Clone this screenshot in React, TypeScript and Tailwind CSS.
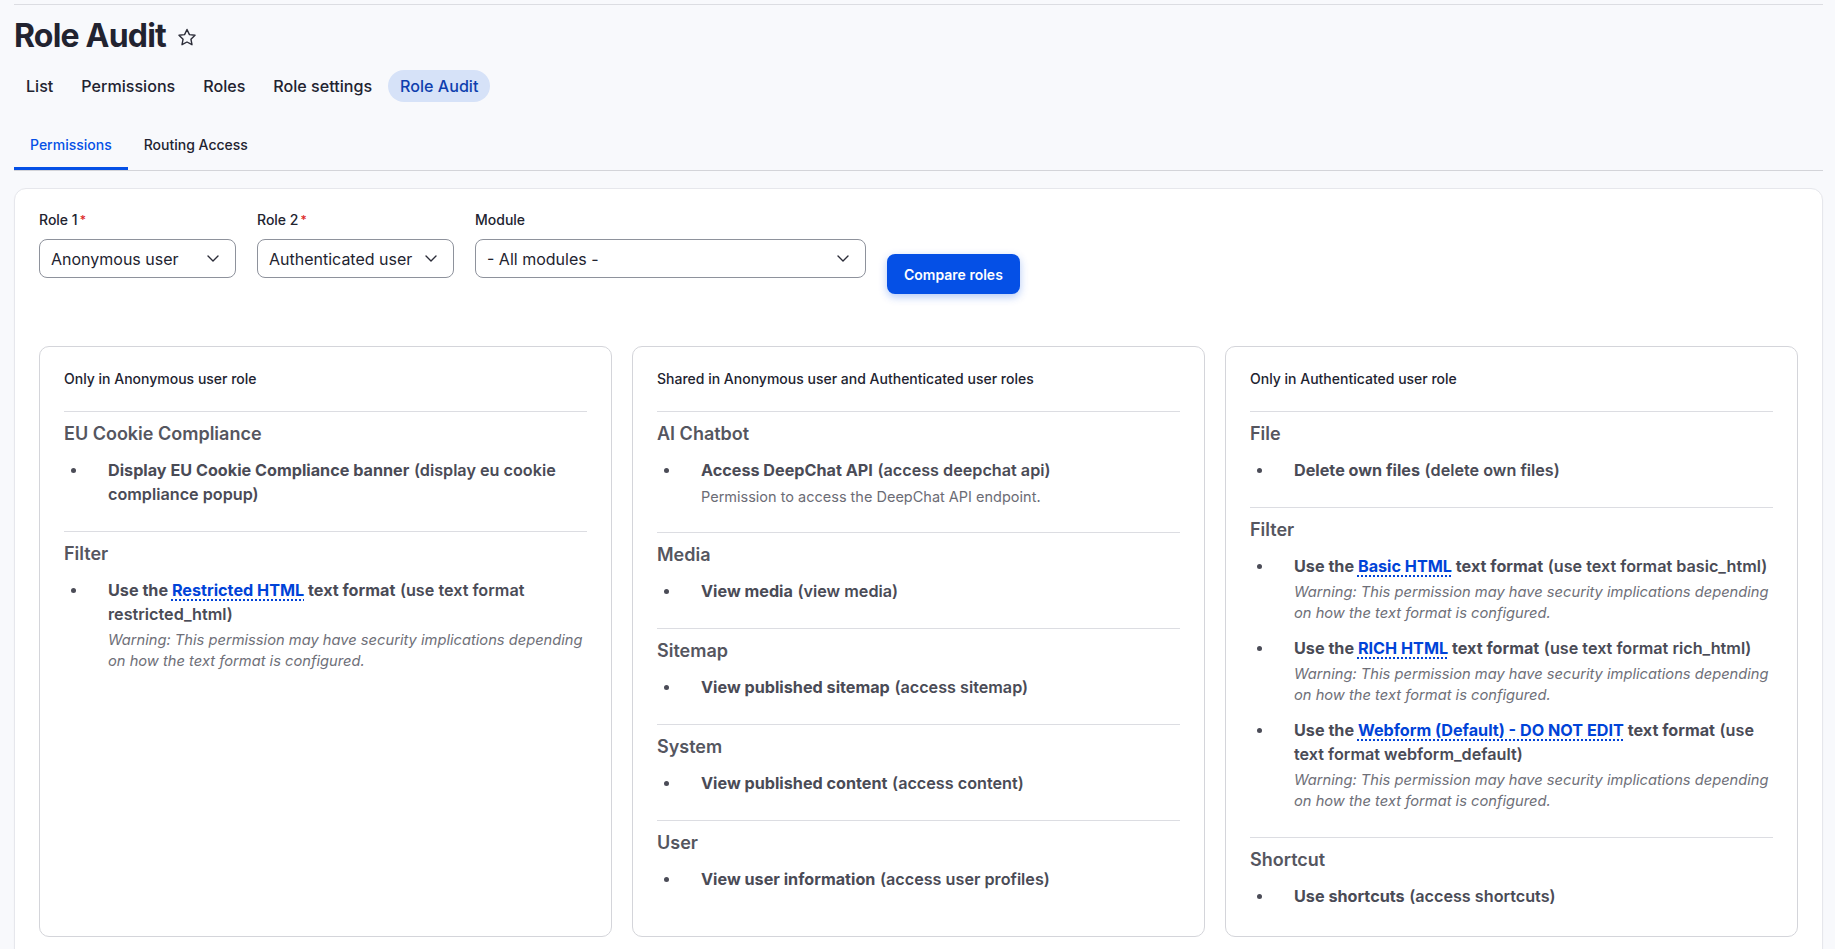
import type { ReactNode } from "react"

type Perm = {
  title: ReactNode
  machine: string
  desc?: string
  warning?: boolean
}

type Section = {
  name: string
  perms: Perm[]
}

type Column = {
  heading: string
  sections: Section[]
}

const Link = ({ children }: { children: ReactNode }) => (
  <a className="text-[#0043d8] underline decoration-dotted decoration-[1.5px] underline-offset-[3px]">{children}</a>
)

const columns: Column[] = [
  {
    heading: "Only in Anonymous user role",
    sections: [
      {
        name: "EU Cookie Compliance",
        perms: [
          {
            title: "Display EU Cookie Compliance banner",
            machine: "display eu cookie compliance popup",
          },
        ],
      },
      {
        name: "Filter",
        perms: [
          {
            title: (
              <>
                Use the <Link>Restricted HTML</Link> text format
              </>
            ),
            machine: "use text format restricted_html",
            warning: true,
          },
        ],
      },
    ],
  },
  {
    heading: "Shared in Anonymous user and Authenticated user roles",
    sections: [
      {
        name: "AI Chatbot",
        perms: [
          {
            title: "Access DeepChat API",
            machine: "access deepchat api",
            desc: "Permission to access the DeepChat API endpoint.",
          },
        ],
      },
      { name: "Media", perms: [{ title: "View media", machine: "view media" }] },
      { name: "Sitemap", perms: [{ title: "View published sitemap", machine: "access sitemap" }] },
      { name: "System", perms: [{ title: "View published content", machine: "access content" }] },
      { name: "User", perms: [{ title: "View user information", machine: "access user profiles" }] },
    ],
  },
  {
    heading: "Only in Authenticated user role",
    sections: [
      { name: "File", perms: [{ title: "Delete own files", machine: "delete own files" }] },
      {
        name: "Filter",
        perms: [
          {
            title: (
              <>
                Use the <Link>Basic HTML</Link> text format
              </>
            ),
            machine: "use text format basic_html",
            warning: true,
          },
          {
            title: (
              <>
                Use the <Link>RICH HTML</Link> text format
              </>
            ),
            machine: "use text format rich_html",
            warning: true,
          },
          {
            title: (
              <>
                Use the <Link>Webform (Default) - DO NOT EDIT</Link> text format
              </>
            ),
            machine: "use text format webform_default",
            warning: true,
          },
        ],
      },
      { name: "Shortcut", perms: [{ title: "Use shortcuts", machine: "access shortcuts" }] },
    ],
  },
]

const Chevron = () => (
  <svg width="12" height="7" viewBox="0 0 12 7" fill="none" className="shrink-0">
    <path d="M1 1l5 5 5-5" stroke="#2b2c38" strokeWidth="1.4" strokeLinecap="round" strokeLinejoin="round" />
  </svg>
)

function Select({ label, value, width }: { label: string; value: string; width: string }) {
  return (
    <div className={`flex flex-col ${width}`}>
      <label className="text-[14px] leading-5 font-medium text-[#222330] mb-[9px]">
        {label}
        {label !== "Module" && <span className="text-[#dc2626] ml-[2px] align-top text-[12px]">*</span>}
      </label>
      <div className="h-[39px] rounded-lg border border-[#8e929c] bg-white flex items-center justify-between pl-[11px] pr-[16px]">
        <span className="text-[16px] text-[#222330] whitespace-nowrap">{value}</span>
        <Chevron />
      </div>
    </div>
  )
}

function PermItem({ p }: { p: Perm }) {
  return (
    <li className="flex pb-3">
      <span className="w-11 shrink-0 flex items-start pt-[10px] pl-[7px]">
        <span className="w-[5px] h-[5px] rounded-full bg-[#4b4c57]" />
      </span>
      <div className="min-w-0">
        <div className="text-[16.2px] leading-6 text-[#4a4b56]">
          <span className="font-bold">{p.title}</span> <span className="font-semibold">({p.machine})</span>
        </div>
        {p.desc && <div className="mt-1 text-[14.5px] leading-[21px] text-[#6b6c75]">{p.desc}</div>}
        {p.warning && (
          <div className="mt-1 text-[14.7px] leading-[21px] italic text-[#6e6f78]">
            Warning: This permission may have security implications depending on how the text format is configured.
          </div>
        )}
      </div>
    </li>
  )
}

function ResultCard({ col }: { col: Column }) {
  return (
    <div className="rounded-[10px] border border-[#d4d5da] bg-white px-6 pt-[22px] pb-[3px]">
      <div className="text-[14px] leading-5 font-medium text-[#222330] mb-[22px]">{col.heading}</div>
      {col.sections.map((s) => (
        <div key={s.name} className="border-t border-[#dcdde2] pt-[10px]">
          <h3 className="text-[18px] leading-6 font-semibold text-[#55565f]">{s.name}</h3>
          <ul className="mt-3 mb-[13px]">
            {s.perms.map((p, i) => (
              <PermItem key={i} p={p} />
            ))}
          </ul>
        </div>
      ))}
    </div>
  )
}

export default function App() {
  const navTabs = ["List", "Permissions", "Roles", "Role settings", "Role Audit"]

  return (
    <div
      className="min-h-screen bg-[#f8f9fc] pl-[14px] pr-3 text-[#222330]"
      style={{ fontFamily: "Inter, 'Noto Sans', sans-serif" }}
    >
      <div className="pt-1">
        <div className="border-t border-[#dcdde2]" />
      </div>

      {/* title */}
      <div className="flex items-center gap-[11px] mt-[11px] h-10">
        <h1 className="text-[32px] leading-10 font-bold tracking-[-0.025em] text-[#222330]">Role Audit</h1>
        <svg width="20" height="19" viewBox="0 0 24 23" fill="none" className="mt-[2px]">
          <path
            d="M12 1.8l2.95 6.2 6.75.85-4.95 4.68 1.27 6.7L12 16.95l-6.02 3.28 1.27-6.7L2.3 8.85l6.75-.85L12 1.8z"
            stroke="#2b2c38"
            strokeWidth="1.7"
            strokeLinejoin="round"
          />
        </svg>
      </div>

      {/* primary tabs */}
      <div className="flex items-center gap-1 mt-[14px]">
        {navTabs.map((t) => (
          <div
            key={t}
            className={`h-8 px-3 flex items-center rounded-full text-[16.1px] font-medium ${
              t === "Role Audit" ? "bg-[#d6e2f8] text-[#0f3fae]" : "text-[#222330]"
            }`}
          >
            {t}
          </div>
        ))}
      </div>

      {/* secondary tabs */}
      <div className="mt-5 border-b border-[#d3d4d9] flex">
        <div className="h-12 px-4 flex items-center text-[14px] font-medium text-[#0550e6] border-b-[3px] border-[#0550e6] -mb-px pb-[1px]">
          Permissions
        </div>
        <div className="h-12 px-4 flex items-center text-[14px] font-medium text-[#222330] pb-[3px]">Routing Access</div>
      </div>

      {/* main card */}
      <div className="mt-[17px] rounded-xl border border-[#e6e7ec] bg-white px-6 pt-[21px] pb-6 shadow-[0_1px_2px_rgba(0,0,0,0.03)]">
        <div className="flex items-start gap-[21px]">
          <Select label="Role 1" value="Anonymous user" width="w-[197px]" />
          <Select label="Role 2" value="Authenticated user" width="w-[197px]" />
          <Select label="Module" value="- All modules -" width="w-[391px]" />
          <button className="mt-[44px] h-10 px-[17px] rounded-lg bg-[#0550e6] text-white text-[14px] font-semibold shadow-[0_3px_8px_rgba(5,80,230,0.3)]">
            Compare roles
          </button>
        </div>

        <div className="grid grid-cols-3 gap-5 mt-[52px]">
          {columns.map((c) => (
            <ResultCard key={c.heading} col={c} />
          ))}
        </div>
      </div>
    </div>
  )
}
